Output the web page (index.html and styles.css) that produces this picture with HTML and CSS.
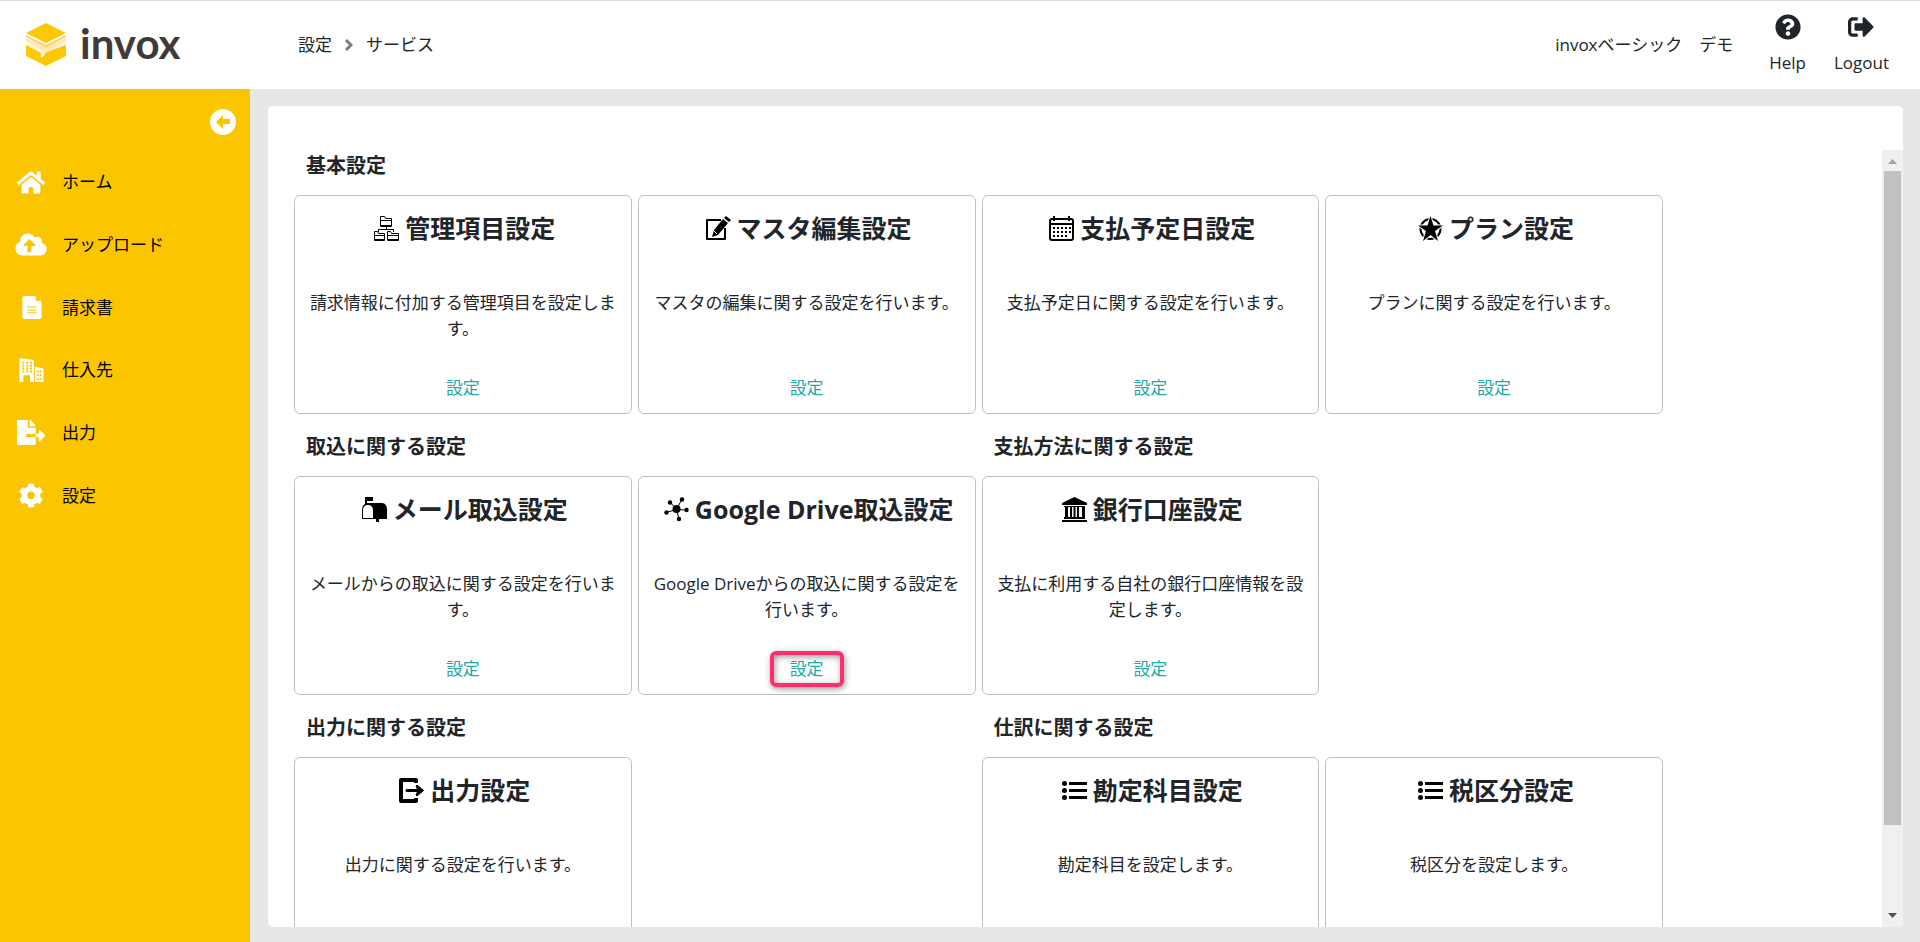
FILE: index.html
```html
<!DOCTYPE html>
<html lang="ja">
<head>
<meta charset="utf-8">
<meta name="viewport" content="width=device-width, initial-scale=1">
<title>invox - サービス設定</title>
<link rel="stylesheet" href="styles.css">
</head>
<body>
<header class="header">
  <a class="brand" href="#">
    <svg class="brand-mark" viewBox="0 0 42 44" aria-hidden="true">
      <path fill="#fff3d6" d="M1 19 21 28l20-9v3L21 33 1 22z"/>
      <path fill="#ffe6ac" d="M1 15 21 25l20-10v3L21 29 1 18z"/>
      <path fill="#fdd36a" d="M1 12 21 22l20-10v2L21 25 1 14z"/>
      <path fill="#fdc800" d="M21 0 41 10 21 20 1 10zM1 22l15 8v5l4-3v-2l2-1 19-7v11L21 43 1 33z"/>
    </svg>
    <span class="brand-name">invox</span>
  </a>
  <nav class="breadcrumb" aria-label="パンくず">
    <a href="#">設定</a>
    <svg class="chevron" viewBox="0 0 8 12" aria-hidden="true"><path d="M1 1l5 5-5 5" fill="none" stroke="#7c7c7c" stroke-width="3"/></svg>
    <span>サービス</span>
  </nav>
  <div class="account"><span>invoxベーシック</span><span>デモ</span></div>
  <a class="action" href="#">
    <svg viewBox="0 0 512 512" aria-hidden="true"><path d="M504 256c0 136.997-111.043 248-248 248S8 392.997 8 256C8 119.083 119.043 8 256 8s248 111.083 248 248zM262.655 90c-54.497 0-89.255 22.957-116.549 63.758-3.536 5.286-2.353 12.415 2.715 16.258l34.699 26.31c5.205 3.947 12.621 3.008 16.665-2.122 17.864-22.658 30.113-35.797 57.303-35.797 20.429 0 45.698 13.148 45.698 32.958 0 14.976-12.363 22.667-32.534 33.976C247.128 238.528 216 254.941 216 296v4c0 6.627 5.373 12 12 12h56c6.627 0 12-5.373 12-12v-1.333c0-28.462 83.186-29.647 83.186-106.667 0-58.002-60.165-102-116.531-102zM256 338c-25.365 0-46 20.635-46 46 0 25.364 20.635 46 46 46s46-20.636 46-46c0-25.365-20.635-46-46-46z"/></svg>
    Help
  </a>
  <a class="action" href="#">
    <svg viewBox="0 0 512 512" aria-hidden="true"><path d="M497 273L329 441c-15 15-41 4.500-41-17v-96H152c-13.300 0-24-10.700-24-24v-96c0-13.300 10.700-24 24-24h136V88c0-21.400 25.900-32 41-17l168 168c9.300 9.400 9.300 24.600 0 34zM192 436v-40c0-6.600-5.400-12-12-12H96c-17.700 0-32-14.300-32-32V160c0-17.700 14.300-32 32-32h84c6.600 0 12-5.400 12-12V76c0-6.600-5.400-12-12-12H96c-53 0-96 43-96 96v192c0 53 43 96 96 96h84c6.600 0 12-5.400 12-12z"/></svg>
    Logout
  </a>
</header>

<div class="body">
  <aside class="sidebar">
    <button class="collapse" type="button" aria-label="メニューを閉じる">
      <svg viewBox="0 0 26 26" aria-hidden="true"><circle cx="13" cy="13" r="13" fill="#fff"/><path fill="#fbc600" d="M13 6v4h7v5h-7v5L6 13z"/></svg>
    </button>
    <nav class="menu">
      <a href="#"><svg viewBox="0 0 576 512" aria-hidden="true"><path d="M280.370 148.260L96 300.110V464a16 16 0 0 0 16 16l112.060-.29a16 16 0 0 0 15.920-16V368a16 16 0 0 1 16-16h64a16 16 0 0 1 16 16v95.640a16 16 0 0 0 16 16.050L464 480a16 16 0 0 0 16-16V300L295.670 148.260a12.190 12.190 0 0 0-15.300 0zM571.600 251.470L488 182.560V44.050a12 12 0 0 0-12-12h-56a12 12 0 0 0-12 12v72.610L318.470 43a48 48 0 0 0-61 0L4.340 251.470a12 12 0 0 0-1.600 16.900l25.500 31A12 12 0 0 0 45.150 301l235.220-193.740a12.190 12.190 0 0 1 15.300 0L530.900 301a12 12 0 0 0 16.900-1.600l25.500-31a12 12 0 0 0-1.700-16.930z"/></svg>ホーム</a>
      <a href="#"><svg viewBox="0 0 640 512" aria-hidden="true"><path d="M537.600 226.600c4.100-10.700 6.400-22.400 6.400-34.600 0-53-43-96-96-96-19.700 0-38.100 6-53.300 16.200C367 64.200 315.300 32 256 32c-88.400 0-160 71.600-160 160 0 2.700.1 5.400.2 8.100C40.200 219.800 0 273.200 0 336c0 79.500 64.500 144 144 144h368c70.700 0 128-57.300 128-128 0-61.900-44-113.600-102.400-125.400zM393 288h-65v112c0 8.800-7.200 16-16 16h-48c-8.800 0-16-7.200-16-16V288h-65c-14.300 0-21.400-17.200-11.300-27.400l105.400-105.400c6.200-6.200 16.400-6.200 22.600 0l105.400 105.400c10.100 10.200 2.900 27.400-12.100 27.400z"/></svg>アップロード</a>
      <a href="#"><svg viewBox="0 0 24 26" aria-hidden="true"><path fill-rule="evenodd" d="M5 1h11l7 6v16a2 2 0 0 1-2 2H5a2 2 0 0 1-2-2V3a2 2 0 0 1 2-2zM17 2v4h5zM8 12v1h10v-1zM8 15v1h9v-1zM8 18v1h10v-1z"/></svg>請求書</a>
      <a href="#"><svg viewBox="0 0 26 26" aria-hidden="true"><path fill-rule="evenodd" d="M1 0l15 2v23h-4v-7H5v7H1zM4 4v2h2V4zm4 0v2h2V4zm4 0v2h2V4zM4 7v2h2V7zm4 0v2h2V7zm4 0v2h2V7zM4 10v2h2v-2zm4 0v2h2v-2zm4 0v2h2v-2zM4 13v2h2v-2zm4 0v2h2v-2zm4 0v2h2v-2zM17 9l9 2v14h-9zm2 4v2h2v-2zm3 0v2h2v-2zm-3 4v2h2v-2zm3 0v2h2v-2zm-3 4v2h2v-2zm3 0v2h2v-2z"/></svg>仕入先</a>
      <a href="#"><svg viewBox="0 0 576 512" aria-hidden="true"><path d="M384 121.900c0-6.300-2.500-12.400-7-16.900L279.100 7c-4.500-4.500-10.600-7-17-7H256v128h128zM571 308l-95.700-96.400c-10.100-10.100-27.400-3-27.400 11.300V288h-64v64h64v65.200c0 14.300 17.300 21.400 27.400 11.300L571 332c6.600-6.600 6.600-17.400 0-24zm-379 28v-32c0-8.800 7.200-16 16-16h176V160H248c-13.200 0-24-10.800-24-24V0H24C10.700 0 0 10.700 0 24v464c0 13.300 10.700 24 24 24h336c13.300 0 24-10.700 24-24V352H208c-8.800 0-16-7.200-16-16z"/></svg>出力</a>
      <a href="#"><svg viewBox="0 0 512 512" aria-hidden="true"><path d="M487.400 315.700l-42.600-24.600c4.300-23.200 4.300-47 0-70.200l42.600-24.600c4.900-2.800 7.100-8.600 5.500-14-11.100-35.600-30-67.800-54.700-94.600-3.800-4.100-10-5.100-14.800-2.300L380.800 110c-17.900-15.400-38.500-27.300-60.800-35.100V25.800c0-5.600-3.900-10.500-9.400-11.700-36.700-8.200-74.300-7.800-109.200 0-5.500 1.200-9.400 6.100-9.400 11.700V75c-22.200 7.900-42.800 19.800-60.800 35.100L88.700 85.500c-4.900-2.800-11-1.900-14.800 2.300-24.700 26.700-43.600 58.900-54.700 94.600-1.700 5.400.6 11.200 5.500 14L67.300 221c-4.300 23.200-4.300 47 0 70.200l-42.600 24.600c-4.900 2.800-7.100 8.600-5.500 14 11.100 35.600 30 67.800 54.700 94.600 3.800 4.100 10 5.100 14.800 2.300l42.600-24.600c17.900 15.400 38.500 27.300 60.800 35.100v49.200c0 5.600 3.900 10.500 9.400 11.700 36.700 8.200 74.300 7.800 109.200 0 5.500-1.200 9.400-6.100 9.400-11.700v-49.200c22.200-7.900 42.800-19.800 60.800-35.100l42.600 24.600c4.900 2.800 11 1.900 14.800-2.300 24.700-26.700 43.600-58.900 54.700-94.600 1.500-5.500-.7-11.300-5.600-14.100zM256 336c-44.100 0-80-35.900-80-80s35.900-80 80-80 80 35.900 80 80-35.900 80-80 80z"/></svg>設定</a>
    </nav>
  </aside>

  <main class="panel">
    <div class="scroller">
      <div class="services">
        <h2 class="section section-first">基本設定</h2>
        <section class="card">
          <h3><svg viewBox="0 0 25 25" aria-hidden="true"><path fill="none" stroke="#000" d="M6.500 10.500v-10h4l1 2h6v8zM6 4.500h12M6 9.500h12M12.500 10.500v3M4.500 16v-2.500h15V16M.5 24.500v-9h3l1 2h6v7zM0 19.500h11M0 23.500h11M13.500 24.500v-9h3l1 2h7v7zM13 19.500h12M13 23.500h12"/></svg>管理項目設定</h3>
          <p>請求情報に付加する管理項目を設定します。</p><a href="#">設定</a>
        </section>
        <section class="card">
          <h3><svg viewBox="0 0 25 25" aria-hidden="true"><path fill="none" stroke="#000" stroke-width="2" stroke-linejoin="round" d="M15 4H1v19h18V12"/><path d="M17 3l5 4-10 12-6 2 2-7zM18 2l2-2 5 4-2 2z"/><path stroke="#fff" d="M8 15l3 3"/></svg>マスタ編集設定</h3>
          <p>マスタの編集に関する設定を行います。</p><a href="#">設定</a>
        </section>
        <section class="card">
          <h3><svg viewBox="0 0 25 25" aria-hidden="true"><rect x="1" y="3" width="23" height="21" rx="2" fill="none" stroke="#000" stroke-width="2"/><path stroke="#000" stroke-width="2" d="M5 0v5M20 0v5M1 8h23"/><path stroke="#000" stroke-width="2" stroke-dasharray="2 2" d="M4 12h18M4 16h18M4 20h14"/></svg>支払予定日設定</h3>
          <p>支払予定日に関する設定を行います。</p><a href="#">設定</a>
        </section>
        <section class="card">
          <h3><svg viewBox="0 0 25 25" aria-hidden="true"><circle cx="12.500" cy="13" r="10" fill="none" stroke="#000" stroke-width="2"/><path stroke="#fff" stroke-width="2" d="M12.500 0l3 9.500H25l-8 5.500 3 10-7.500-6L5 25l3-10-8-5.500h9.500z"/><path d="M12.500 0l3 9.500H25l-8 5.500 3 10-7.500-6L5 25l3-10-8-5.500h9.500z"/></svg>プラン設定</h3>
          <p>プランに関する設定を行います。</p><a href="#">設定</a>
        </section>

        <h2 class="section">取込に関する設定</h2>
        <h2 class="section">支払方法に関する設定</h2>
        <section class="card">
          <h3><svg viewBox="0 0 25 25" aria-hidden="true"><path fill-rule="evenodd" d="M3 7V0h8v4H5v2h15c3 0 5 3 5 6v10h-8v3h-3v-3H0V13c0-3 1-5 3-6zm3 1c-3 0-5 2-5 5v8h10v-8c0-3-2-5-5-5z"/></svg>メール取込設定</h3>
          <p>メールからの取込に関する設定を行います。</p><a href="#">設定</a>
        </section>
        <section class="card">
          <h3><svg viewBox="0 0 25 25" aria-hidden="true"><path stroke="#000" d="M12.500 12.500L18 2M12.500 12.500L6 5M12.500 12.500L2 15.500M12.500 12.500l10 .5M12.500 12.500L15 22"/><circle cx="12.500" cy="12" r="4"/><circle cx="18" cy="2.500" r="2.200"/><circle cx="6" cy="5.500" r="2.200"/><circle cx="2.500" cy="15.500" r="2.200"/><circle cx="22.500" cy="13" r="2.200"/><circle cx="15" cy="22" r="2.200"/></svg>Google Drive取込設定</h3>
          <p>Google Driveからの取込に関する設定を行います。</p><a class="marked" href="#">設定</a>
        </section>
        <section class="card">
          <h3><svg viewBox="0 0 25 25" aria-hidden="true"><path d="M12.500 0L25 6v2H0V6zM2 9h21v1H2zM3 10h3v10H3zM8 10h2v10H8zM15 10h2v10h-2zM20 10h3v10h-3zM11.500 10h2v10h-2zM2 20h21v2H2zM0 23h25v2H0z"/></svg>銀行口座設定</h3>
          <p>支払に利用する自社の銀行口座情報を設定します。</p><a href="#">設定</a>
        </section>

        <h2 class="section">出力に関する設定</h2>
        <h2 class="section">仕訳に関する設定</h2>
        <section class="card">
          <h3><svg viewBox="0 0 25 25" aria-hidden="true"><path fill="none" stroke="#000" stroke-width="4" stroke-linejoin="round" d="M17 5V2H2v21h15v-3"/><path fill="none" stroke="#000" stroke-width="3" stroke-linecap="round" d="M8 12.500h14"/><path stroke="#000" stroke-linejoin="round" d="M18 7l6.500 5.500L18 18l-1-1 2-4.500L17 8z"/></svg>出力設定</h3>
          <p>出力に関する設定を行います。</p><a href="#">設定</a>
        </section>
        <section class="card card-third">
          <h3><svg viewBox="0 0 25 25" aria-hidden="true"><path d="M7 4h18v3H7zM7 11h18v3H7zM7 18h18v3H7z"/><circle cx="2.500" cy="5.500" r="2.500"/><circle cx="2.500" cy="12.500" r="2.500"/><circle cx="2.500" cy="19.500" r="2.500"/></svg>勘定科目設定</h3>
          <p>勘定科目を設定します。</p><a href="#">設定</a>
        </section>
        <section class="card">
          <h3><svg viewBox="0 0 25 25" aria-hidden="true"><path d="M7 4h18v3H7zM7 11h18v3H7zM7 18h18v3H7z"/><circle cx="2.500" cy="5.500" r="2.500"/><circle cx="2.500" cy="12.500" r="2.500"/><circle cx="2.500" cy="19.500" r="2.500"/></svg>税区分設定</h3>
          <p>税区分を設定します。</p><a href="#">設定</a>
        </section>
      </div>
    </div>
    <div class="scrollbar" aria-hidden="true">
      <svg viewBox="0 0 21 21"><path fill="#a3a3a3" d="M6 14l4.500-5 4.500 5z"/></svg>
      <div class="track"><div class="thumb"></div></div>
      <svg viewBox="0 0 21 21"><path fill="#505050" d="M6 7l4.500 5L15 7z"/></svg>
    </div>
  </main>
</div>
</body>
</html>
```
FILE: styles.css
```css
* {
  box-sizing: border-box;
}

body {
  display: flex;
  flex-direction: column;
  height: 100vh;
  margin: 0;
  overflow: hidden;
  background: #e7e7e7;
  color: #212529;
  font: 400 17px/26px "Open Sans", "Noto Sans CJK JP", sans-serif;
}

a {
  color: inherit;
  text-decoration: none;
}

svg {
  display: block;
  flex: none;
}

.header {
  display: flex;
  align-items: center;
  flex: none;
  height: 89px;
  padding-right: 31px;
  border-top: 1px solid #dadae0;
  background: #fff;
}

.brand {
  display: flex;
  align-items: center;
  gap: 13px;
  width: 298px;
  padding-left: 25px;
}

.brand-mark {
  width: 42px;
  height: 44px;
}

.brand-name {
  padding-bottom: 4px;
  color: #403b3a;
  font: 700 42px/44px Lato, sans-serif;
}

.breadcrumb {
  display: flex;
  align-items: center;
  gap: 13px;
}

.chevron {
  width: 8px;
  height: 12px;
}

.account {
  display: flex;
  gap: 17px;
  margin-left: auto;
  padding-right: 8px;
}

.action {
  display: flex;
  flex-direction: column;
  align-items: center;
  gap: 10px;
  margin-left: 28px;
}

.action svg {
  width: 26px;
  height: 26px;
  fill: #212529;
}

.body {
  display: flex;
  flex: 1;
  min-height: 0;
}

.sidebar {
  flex: none;
  width: 250px;
  padding-top: 20px;
  background: #fbc600;
}

.collapse {
  display: block;
  margin: 0 14px 0 auto;
  padding: 0;
  border: 0;
  background: none;
  cursor: pointer;
}

.collapse svg {
  width: 26px;
  height: 26px;
}

.menu {
  display: grid;
  grid-auto-rows: 1fr;
  height: 376px;
  margin-top: 16px;
  color: #000;
}

.menu a {
  display: flex;
  align-items: center;
  gap: 15px;
  padding-left: 15px;
}

.menu svg {
  width: 32px;
  height: 25px;
  fill: #fff;
}

.panel {
  display: flex;
  flex: 1;
  min-width: 0;
  margin: 17px 17px 15px 18px;
  padding-top: 44px;
  overflow: hidden;
  border-radius: 5px;
  background: #fff;
}

.scroller {
  flex: 1;
  min-width: 0;
  overflow-y: auto;
  scrollbar-width: none;
}

.services {
  display: grid;
  grid-template-columns: repeat(4, minmax(0, 1fr));
  column-gap: 6px;
  padding: 0 219px 0 26px;
}

.section {
  grid-column: span 2;
  margin: 0;
  padding: 20px 12px 16px;
  font-size: 20px;
  font-weight: 700;
  line-height: 26px;
}

.section-first {
  grid-column: 1 / -1;
  padding-top: 3px;
}

.card {
  display: flex;
  flex-direction: column;
  align-items: center;
  height: 219px;
  padding: 16px 9px 12px;
  border: 1px solid #bfbfbf;
  border-radius: 6px;
  text-align: center;
}

.card-third {
  grid-column: 3;
}

.card h3 {
  display: flex;
  align-items: center;
  gap: 6px;
  margin: 0 0 46px;
  padding-left: 4px;
  font-size: 25px;
  font-weight: 700;
  line-height: 32px;
  white-space: nowrap;
}

.card h3 svg {
  width: 25px;
  height: 25px;
}

.card p {
  margin: 0;
}

.card a {
  margin-top: auto;
  color: #20a8a4;
}

.card .marked {
  position: relative;
}

/* Outline that calls attention to one link without moving it */
.marked::after {
  position: absolute;
  inset: -5px -20px;
  border: 4px solid #ff2d6b;
  border-radius: 6px;
  box-shadow: 1px 2px 6px #00000066, inset 1px 2px 6px #00000066;
  content: "";
}

.scrollbar {
  display: flex;
  flex-direction: column;
  flex: none;
  width: 21px;
  background: #f0f0f0;
}

.scrollbar svg {
  width: 21px;
  height: 21px;
}

.track {
  flex: 1;
  padding: 0 2px;
}

.thumb {
  height: 89%;
  background: #c1c1c1;
}
```
